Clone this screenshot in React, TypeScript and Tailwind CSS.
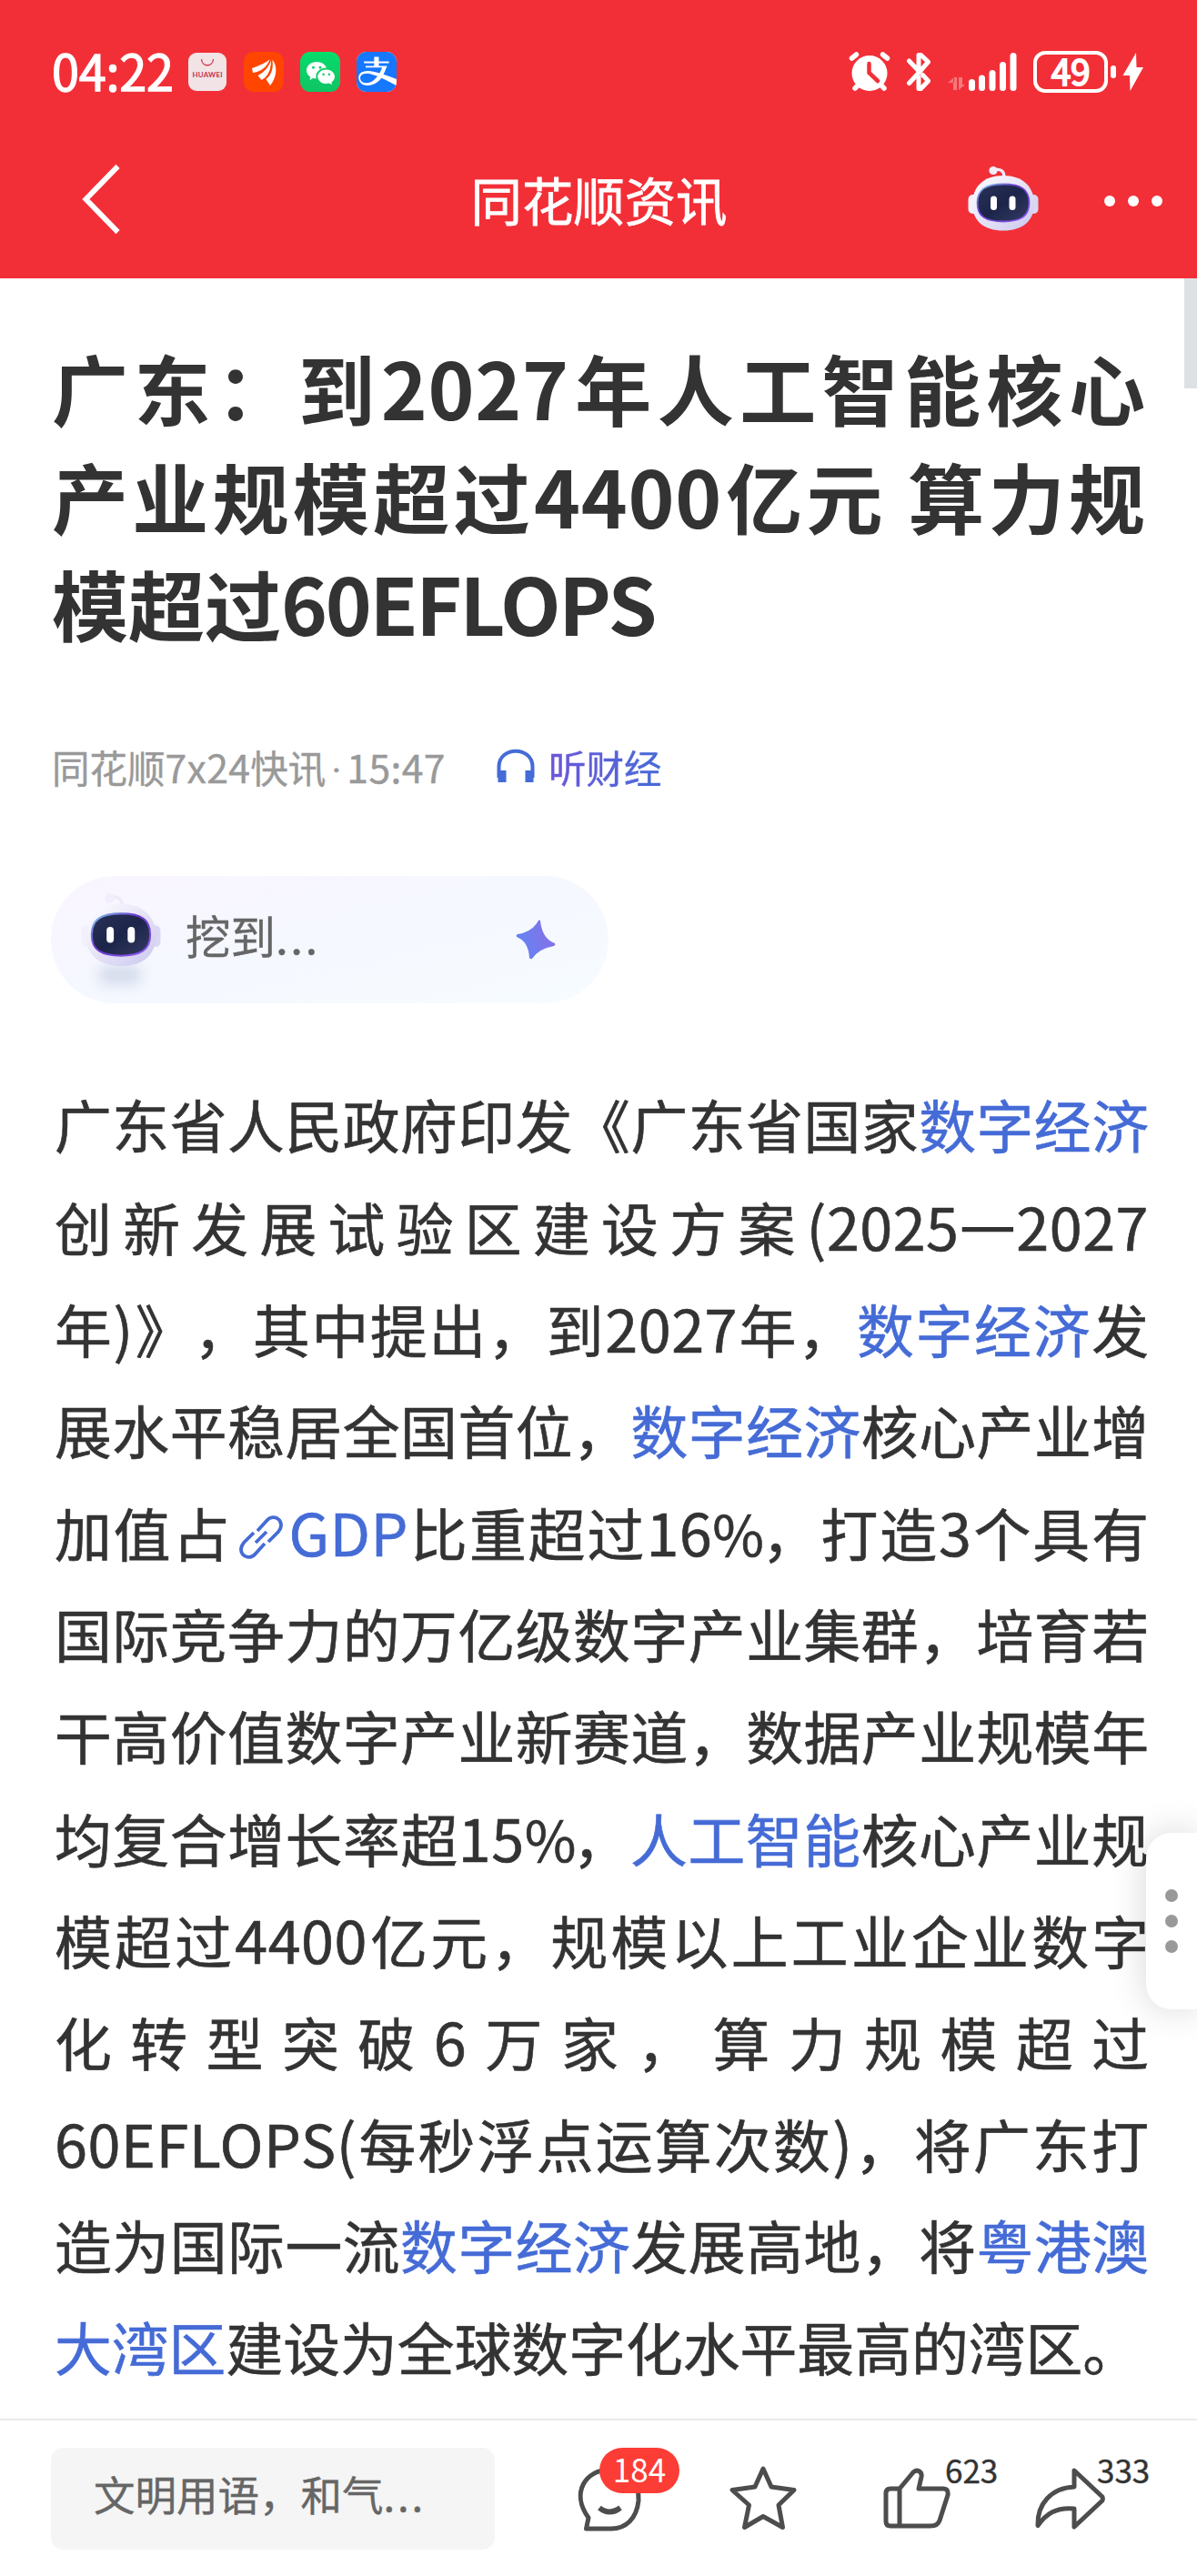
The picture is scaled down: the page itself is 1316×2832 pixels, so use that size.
import type { ReactNode } from "react";
import { BsWechat } from "react-icons/bs";
import { FaAlipay } from "react-icons/fa";

type Run = {
  text: string;
  link?: boolean;
  icon?: boolean;
};

const TITLE = [
  "广东：到2027年人工智能核心",
  "产业规模超过4400亿元 算力规",
  "模超过60EFLOPS",
];

const BODY: Run[][] = [
  [{ text: "广东省人民政府印发《广东省国家" }, { text: "数字经济", link: true }],
  [{ text: "创新发展试验区建设方案(2025—2027" }],
  [
    { text: "年)》，其中提出，到2027年，" },
    { text: "数字经济", link: true },
    { text: "发" },
  ],
  [
    { text: "展水平稳居全国首位，" },
    { text: "数字经济", link: true },
    { text: "核心产业增" },
  ],
  [
    { text: "加值占" },
    { text: "GDP", link: true, icon: true },
    { text: "比重超过16%，打造3个具有" },
  ],
  [{ text: "国际竞争力的万亿级数字产业集群，培育若" }],
  [{ text: "干高价值数字产业新赛道，数据产业规模年" }],
  [
    { text: "均复合增长率超15%，" },
    { text: "人工智能", link: true },
    { text: "核心产业规" },
  ],
  [{ text: "模超过4400亿元，规模以上工业企业数字" }],
  [{ text: "化转型突破6万家，算力规模超过" }],
  [{ text: "60EFLOPS(每秒浮点运算次数)，将广东打" }],
  [
    { text: "造为国际一流" },
    { text: "数字经济", link: true },
    { text: "发展高地，将" },
    { text: "粤港澳", link: true },
  ],
  [
    { text: "大湾区", link: true },
    { text: "建设为全球数字化水平最高的湾区。" },
  ],
];

const latinClass = (part: string, tight?: boolean) => {
  if (part === "—") return "[-webkit-text-stroke:2.6px_currentColor]";
  if (part === "%") return "text-[0.98em] tracking-[-0.07em]";
  return tight ? "text-[1.03em] tracking-[-0.027em]" : "text-[1.03em] tracking-[0.008em]";
};

// Latin runs are set a touch larger than the Chinese around them
const Mixed = ({ text, tight }: { text: string; tight?: boolean }) => (
  <>
    {text.split(/([0-9A-Za-z():]+|%|—)/).map((part, i) =>
      i % 2 ? (
        <span key={i} className={latinClass(part, tight)}>
          {part}
        </span>
      ) : (
        part
      ),
    )}
  </>
);

const LinkIcon = () => (
  <svg viewBox="0 0 48 48" className="mr-[6px] ml-[9px] inline-block size-[48px] align-[-3px]" fill="none" stroke="#456bd6" strokeWidth="3.8">
    <path d="M20 17 L30 6 C34 1 40 1 44 5 C47 9 47 13 43 18 L32 29" />
    <path d="M28 31 L18 42 C14 47 8 47 4 43 C1 39 1 35 5 30 L16 19" />
    <path d="M18 30 L30 18" />
  </svg>
);

const Robot = ({ id, className }: { id: string; className: string }) => (
  <svg viewBox="0 0 78 74" className={className}>
    <defs>
      <linearGradient id={`${id}-head`} x1="0" y1="0" x2="1" y2="1">
        <stop offset="0" stopColor="#ffffff" />
        <stop offset="0.5" stopColor="#e6e3f7" />
        <stop offset="1" stopColor="#c9c8ee" />
      </linearGradient>
      <linearGradient id={`${id}-rim`} x1="0" y1="0" x2="1" y2="1">
        <stop offset="0" stopColor="#7fd3ee" />
        <stop offset="0.4" stopColor="#6a35c9" />
        <stop offset="1" stopColor="#8a5cf0" />
      </linearGradient>
      <linearGradient id={`${id}-face`} x1="0" y1="0" x2="1" y2="1">
        <stop offset="0" stopColor="#2a3158" />
        <stop offset="0.5" stopColor="#1c2549" />
        <stop offset="1" stopColor="#353b63" />
      </linearGradient>
    </defs>
    <path d="M29 5 C36 3 40 6 40 13" fill="none" stroke="#efeaf8" strokeWidth="3.4" />
    <circle cx="28" cy="5.5" r="4.6" fill="#f3eefb" />
    <rect x="0.5" y="32" width="11" height="21" rx="5" fill="#f2f0fb" />
    <rect x="66.500" y="32" width="11" height="21" rx="5" fill="#d9d7f3" />
    <path d="M39 11 C60 11 73 23 73 42 C73 61 60 71.500 39 71.500 C18 71.500 5 61 5 42 C5 23 18 11 39 11Z" fill={`url(#${id}-head)`} />
    <path
      d="M39 20.500 C58 20.500 67.500 26 67.500 41 C67.500 56 58 61.500 39 61.500 C20 61.500 10.500 56 10.500 41 C10.500 26 20 20.500 39 20.500Z"
      fill={`url(#${id}-face)`}
      stroke={`url(#${id}-rim)`}
      strokeWidth="1.800"
    />
    <rect x="25" y="33.500" width="7" height="15.500" rx="3.500" fill="#fff" />
    <rect x="45.500" y="33.500" width="7" height="15.500" rx="3.500" fill="#fff" />
  </svg>
);

const StatusBar = () => (
  <div className="flex h-[158px] items-center justify-between pl-[57px] pr-[58px]">
    <div className="flex items-center">
      <span className="mb-[5px] w-[150px] text-[54px] leading-[60px] tracking-[-0.2px] [-webkit-text-stroke:1.3px_#fff]">04:22</span>
      <svg viewBox="0 0 42 42" className="size-[42px]">
        <rect width="42" height="42" rx="9" fill="#f1e3e6" />
        <path d="M14.500 7 C15 16 27 16 27.500 7" fill="none" stroke="#d2344a" strokeWidth="1.300" />
        <text x="21" y="27" textAnchor="middle" fontSize="7.800" fontWeight="700" fill="#c9304a" fontFamily="Lato" textLength="33">
          HUAWEI
        </text>
      </svg>
      <svg viewBox="0 0 44 44" className="ml-[19px] size-[44px]">
        <rect width="44" height="44" rx="11" fill="#ff4500" />
        <g fill="#fff">
          <path d="M9 18 C17 15 23 13 29 8 C26 17 18 22 10 23Z" />
          <path d="M15.500 26 C23 22 28 16 30 8.500 C31.500 19 26 28 19.500 31Z" />
          <path d="M24.500 30 C31 25 33 17 31 8.500 C38 15 36 29 29 37Z" />
        </g>
        <path d="M14 24 C22 21 27 16 29.500 8 M23.500 30 C29 24 31.500 17 30.500 8" fill="none" stroke="#ff4500" strokeWidth="1.500" />
      </svg>
      <div className="ml-[18px] flex size-[44px] items-center justify-center rounded-[11px] bg-linear-to-b from-[#05dc6b] to-[#0fc464] text-white">
        <BsWechat size={31} />
      </div>
      <div className="ml-[18px] flex size-[44px] items-center justify-center overflow-hidden rounded-[11px] bg-white text-[#1677ff]">
        <FaAlipay size={52} className="shrink-0" />
      </div>
    </div>
    <div className="flex items-center">
      <svg viewBox="0 0 46 44" className="h-[44px] w-[46px]" stroke="#fff" strokeLinecap="round" fill="none">
        <circle cx="23" cy="23.500" r="19.500" fill="#fff" stroke="none" />
        <path d="M3.500 7 L8.500 3 M42.500 7 L37.500 3 M7 40 L11 36 M39 40 L35 36" strokeWidth="5.500" />
        <path d="M22.500 13 V23 L32 32" stroke="#f22f37" strokeWidth="4.500" />
      </svg>
      <svg viewBox="0 0 28 44" className="ml-[17px] h-[44px] w-[28px]" fill="none" stroke="#fff" strokeWidth="5" strokeLinecap="round" strokeLinejoin="round">
        <path d="M3.500 10 L15 22 L3.500 34.500 M14 17 V3.500 H16.500 L24.500 11 L15 22" />
        <path d="M18.500 25.500 L24.500 32 L16.500 40.500 H14 V28" />
      </svg>
      <svg viewBox="0 0 78 44" className="ml-[17px] h-[44px] w-[78px]" fill="#fff">
        <path d="M7 28 V42 H11 V28 M1 34 L8 28 V34Z M13 28 H17 V36 H20 L13 42Z" opacity="0.350" />
        <rect x="24" y="30" width="7" height="13" rx="3.500" />
        <rect x="35" y="25.500" width="7" height="17.500" rx="3.500" />
        <rect x="46.500" y="20" width="7" height="23" rx="3.500" />
        <rect x="58" y="11" width="7" height="32" rx="3.500" />
        <rect x="69.500" y="1" width="7" height="42" rx="3.500" />
      </svg>
      <div className="ml-[17px] flex h-[46px] w-[82px] justify-center rounded-[13px] border-4 border-white text-[39px] leading-[34px] tracking-[-0.5px] [-webkit-text-stroke:1.8px_#fff]">
        49
      </div>
      <div className="ml-[3px] h-[14px] w-[6px] rounded-full bg-white" />
      <svg viewBox="0 0 24 44" className="ml-[7px] h-[44px] w-[24px]" fill="#fff">
        <path d="M15 1 L15.500 17 H23 L8.500 43 L8 26 H0.500Z" />
      </svg>
    </div>
  </div>
);

const NavBar = () => (
  <div className="flex h-[122px] items-center justify-between pr-[38px] pl-[86px]">
    <svg viewBox="0 0 50 84" className="mb-[2px] h-[82px] w-[50px]" fill="none" stroke="#fff" strokeWidth="6">
      <path d="M44 6 L8 43 L44 80" />
    </svg>
    <h1 className="ml-[117px] text-[56.4px] leading-[80px] [-webkit-text-stroke:0.8px_#fff]">同花顺资讯</h1>
    <div className="flex items-center">
      <Robot id="nav" className="h-[74px] w-[78px]" />
      <div className="mt-[4px] ml-[72px] flex gap-[14px]">
        <i className="size-[12px] rounded-full bg-white" />
        <i className="size-[12px] rounded-full bg-white" />
        <i className="size-[12px] rounded-full bg-white" />
      </div>
    </div>
  </div>
);

const Action = ({ children, count, className }: { children: ReactNode; count?: string; className: string }) => (
  <div className={`relative h-[80px] w-[80px] shrink-0 ${className}`}>
    <svg viewBox="0 0 80 80" className="size-[80px]" fill="none" stroke="#4d4d4d" strokeWidth="5" strokeLinejoin="round">
      {children}
    </svg>
    {count && (
      <span className="absolute top-[-10px] left-[70px] text-[35px] leading-[36px] text-[#333] [-webkit-text-stroke:0.4px_currentColor]">
        {count}
      </span>
    )}
  </div>
);

export default function App() {
  return (
    <div
      lang="zh-CN"
      className="relative flex h-[2832px] w-[1316px] flex-col overflow-hidden bg-white font-['Noto_Sans_CJK_SC',sans-serif] text-[#333] [text-spacing-trim:space-all]"
    >
      <header className="h-[306px] shrink-0 bg-[#f22f37] text-white">
        <StatusBar />
        <NavBar />
      </header>

      <main className="flex-1 pt-[60px] pl-[57px]">
        <h2 className="w-[1202px] text-[84px] leading-[117.6px] font-bold whitespace-nowrap">
          {TITLE.map((line, i) => (
            <span
              key={line}
              className={i < TITLE.length - 1 ? "block [text-align-last:justify]" : "block"}
            >
              <Mixed text={line} tight={i === TITLE.length - 1} />
            </span>
          ))}
        </h2>

        <div className="mt-[89px] flex h-[64px] items-center text-[41.5px] leading-[64px] whitespace-nowrap [-webkit-text-stroke:0.4px_currentColor]">
          <span className="mt-[3px] w-[489px] text-[#999]">
            <Mixed text="同花顺7x24快讯" />
            <span className="inline-block w-[23px] text-center font-[Roboto]">·</span>
            <Mixed text="15:47" />
          </span>
          <svg viewBox="0 0 42 40" className="h-[40px] w-[42px]" fill="none" stroke="#456bd6">
            <path d="M2.500 32 V20 C2.500 -3 39.500 -3 39.500 20 V32" strokeWidth="4" />
            <path d="M6 24 V37 M36 24 V37" strokeWidth="9" />
          </svg>
          <span className="ml-[15px] bg-linear-to-r from-[#6a55dc] to-[#456bd6] bg-clip-text text-transparent">
            听财经
          </span>
        </div>

        <div className="relative mt-[88px] -ml-px flex h-[140px] w-[613px] items-center rounded-full bg-linear-to-br from-[#faf5ff] via-[#f5f8ff] to-[#f7fcff] pl-[33px]">
          <div className="absolute top-[98px] left-[52px] h-[22px] w-[48px] rounded-full bg-[#d5dcec] blur-[7px]" />
          <Robot id="pill" className="relative mb-[20px] h-[84px] w-[88px]" />
          <span className="mb-[10px] ml-[27px] text-[49.5px] leading-[70px] text-[#666] [-webkit-text-stroke:0.4px_currentColor]">
            挖到<span className="tracking-[2.5px]">...</span>
          </span>
          <svg viewBox="0 0 44 44" className="absolute top-[48px] left-[511px] size-[44px]">
            <defs>
              <linearGradient id="spark" x1="0" y1="0.500" x2="1" y2="0.200">
                <stop offset="0" stopColor="#6385f2" />
                <stop offset="1" stopColor="#8a6ee6" />
              </linearGradient>
            </defs>
            <path d="M27 1 Q29 21 43 26 Q44 28 42 29 Q25 32 18 43 Q16 44 15 42 Q14 24 1 19 Q0 17 2 16 Q18 14 25 1 Q26 0 27 1Z" fill="url(#spark)" />
          </svg>
        </div>

        <article className="mt-[76px] ml-[3px] w-[1203px] text-[62.8px] leading-[112px] whitespace-nowrap [-webkit-text-stroke:0.6px_currentColor]">
          {BODY.map((runs, i) => (
            <p key={i} className={i < BODY.length - 1 ? "h-[112px] [text-align-last:justify]" : "h-[112px]"}>
              {runs.map((run, j) => (
                <span key={j} className={run.link ? "text-[#456bd6] [-webkit-text-stroke:0.6px_currentColor]" : ""}>
                  {run.icon && <LinkIcon />}
                  <Mixed text={run.text} />
                </span>
              ))}
            </p>
          ))}
        </article>
      </main>

      <footer className="flex h-[173px] shrink-0 items-start border-t-2 border-[#e9e9e9] bg-white pt-[30px] pl-[56px]">
        <div className="h-[112px] w-[488px] shrink-0 rounded-[14px] bg-[#f5f5f5] pl-[47px] text-[45.5px] leading-[101px] text-[#666] [-webkit-text-stroke:0.4px_currentColor]">
          文明用语，和气<span className="tracking-[2.8px]">...</span>
        </div>
        <Action className="mt-[16px] ml-[86px]">
          <path d="M17 61 C-3 33 14 8 41 8 C62 8 73 24 72 42 C70 62 58 73 42 73 H14.500 Z" />
          <path d="M29 50 Q40 59 52 50" strokeWidth="6" />
        </Action>
        <div className="relative z-10 -ml-[51px] h-[50px] w-[88px] rounded-full bg-[#fc3d35] text-center text-[35px] leading-[46px] text-white">
          184
        </div>
        <Action className="mt-[16px] ml-[52px]">
          <path d="M40 7 L49 27 L74 30.500 L57 47 L61.500 71.500 L40 59.500 L19.500 71.500 L24.500 47 L6 30.500 L31 27Z" />
        </Action>
        <Action className="mt-[16px] ml-[90px]" count="623">
          <path d="M20 29 L35 11 C39 7 45 10 44 16 L41 29 H68 Q74 29 73 36 L64 64 Q62 70 54 70 H10 Q5 70 5 65 V34 Q5 29 10 29 Z M20 29 V70" />
        </Action>
        <Action className="mt-[16px] ml-[87px]" count="333">
          <path d="M45 9 L76 38 Q77 40 76 42 L45 71 V51 C25 49 14 57 5 69.500 C4 46 20 28 45 27 Z" />
        </Action>
      </footer>

      {/* scroll thumb */}
      <div className="absolute top-[306px] right-0 h-[121px] w-[14px] bg-[#dde1e4]" />

      {/* edge drawer handle */}
      <div className="absolute top-[2015px] right-0 flex h-[194px] w-[56px] flex-col items-center justify-center gap-[14px] rounded-l-[28px] bg-white shadow-[0_0_40px_rgba(0,0,0,0.16)]">
        <i className="size-[14px] rounded-full bg-[#999]" />
        <i className="size-[14px] rounded-full bg-[#999]" />
        <i className="size-[14px] rounded-full bg-[#999]" />
      </div>
    </div>
  );
}
